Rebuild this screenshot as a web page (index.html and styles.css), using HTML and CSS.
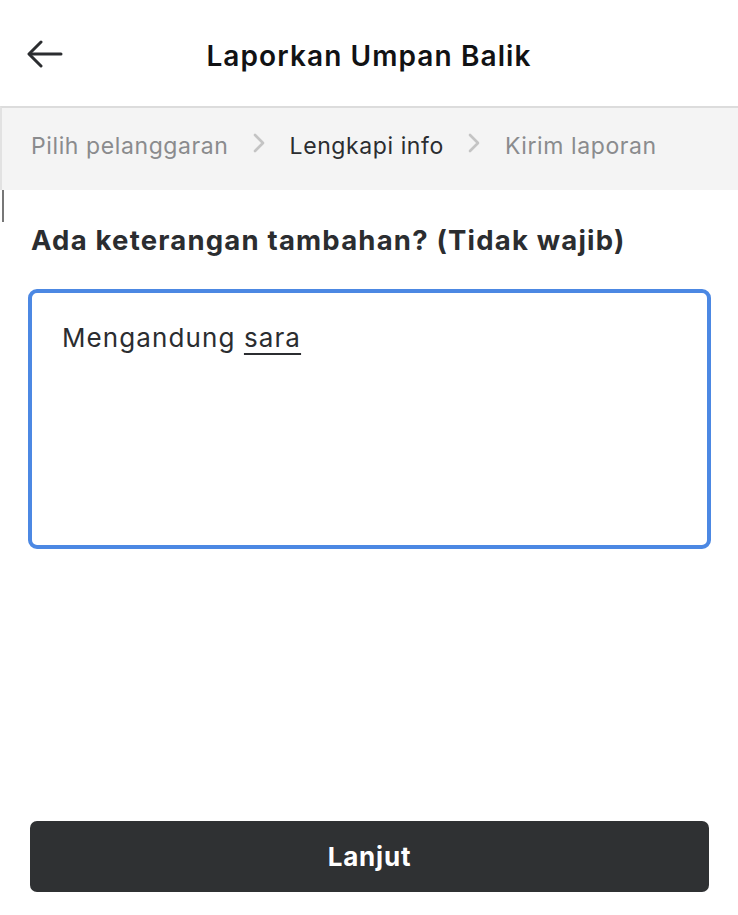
FILE: index.html
```html
<!DOCTYPE html>
<html lang="id">
<head>
<meta charset="utf-8">
<title>Laporkan Umpan Balik</title>
<link rel="stylesheet" href="styles.css">
</head>
<body>
<div class="page">
  <header class="topbar">
    <button class="back" aria-label="Kembali">
      <svg width="36" height="28" viewBox="0 0 36 28" fill="none" stroke="#2b2d30" stroke-width="3" stroke-linecap="round" stroke-linejoin="round">
        <path d="M34 14H3"/>
        <path d="M14 2L2 14l12 12"/>
      </svg>
    </button>
    <h1 class="title">Laporkan Umpan Balik</h1>
  </header>
  <nav class="steps">
    <span class="step">Pilih pelanggaran</span>
    <span class="chev"><svg width="14" height="22" viewBox="0 0 14 22" fill="none" stroke="#c4c4c4" stroke-width="2.6" stroke-linecap="round" stroke-linejoin="round"><path d="M3 3l8 8-8 8"/></svg></span>
    <span class="step active">Lengkapi info</span>
    <span class="chev"><svg width="14" height="22" viewBox="0 0 14 22" fill="none" stroke="#c4c4c4" stroke-width="2.6" stroke-linecap="round" stroke-linejoin="round"><path d="M3 3l8 8-8 8"/></svg></span>
    <span class="step">Kirim laporan</span>
  </nav>
  <main class="content">
    <h2 class="question">Ada keterangan tambahan? (Tidak wajib)</h2>
    <div class="field">
      <p class="field-text">Mengandung <span class="spell">sara</span></p>
    </div>
  </main>
  <footer class="actions">
    <button class="primary">Lanjut</button>
  </footer>
</div>
</body>
</html>
```

FILE: styles.css
```css
* { box-sizing: border-box; }
html, body { margin: 0; padding: 0; background: #fff; }
body {
  font-family: Inter, "Noto Sans", "DejaVu Sans", sans-serif;
  color: #2b2d30;
}
.page {
  width: 738px;
  height: 915px;
  display: flex;
  flex-direction: column;
}
.topbar {
  height: 106px;
  display: flex;
  align-items: center;
  justify-content: center;
  position: relative;
}
.back {
  position: absolute;
  left: 27px;
  top: 40px;
  padding: 0;
  border: 0;
  background: none;
  display: flex;
}
.title {
  margin: 0;
  font-size: 28px;
  font-weight: 600;
  color: #111214;
  letter-spacing: 1.1px;
  padding-top: 5px;
}
.steps {
  height: 84px;
  background: #f4f4f4;
  border-top: 2px solid #dcdcdc;
  border-left: 2px solid #e2e2e2;
  display: flex;
  align-items: center;
  padding-left: 29px;
  padding-bottom: 6px;
}
.step {
  font-size: 23px;
  color: #8a8b8d;
  letter-spacing: 0.6px;
}
.step.active { color: #2b2d30; }
.chev {
  display: flex;
  width: 61px;
  justify-content: center;
  padding-bottom: 6px;
}
.content {
  flex: 1;
  padding: 31px 27px 0 26px;
  border-left: 2px solid transparent;
  background: linear-gradient(#777, #777) no-repeat 0 0 / 2px 32px;
}
.question {
  margin: 0 0 0 3px;
  font-size: 27.5px;
  font-weight: 700;
  color: #2b2d30;
  line-height: 38px;
  letter-spacing: 1.2px;
}
.field {
  margin-top: 30px;
  height: 260px;
  border: 4px solid #4c88e3;
  border-radius: 9px;
  padding: 25px 30px;
}
.field-text {
  margin: 0;
  font-size: 26px;
  line-height: 40px;
  color: #2b2d30;
  letter-spacing: 1.1px;
}
.spell {
  text-decoration: underline;
  text-decoration-thickness: 2px;
  text-underline-offset: 6px;
}
.actions {
  padding: 0 29px 23px 30px;
}
.primary {
  width: 100%;
  height: 71px;
  border: 0;
  border-radius: 7px;
  background: #2f3133;
  color: #fff;
  font-family: Inter, "Noto Sans", sans-serif;
  font-size: 26px;
  font-weight: 700;
  letter-spacing: 0.8px;
}
```
